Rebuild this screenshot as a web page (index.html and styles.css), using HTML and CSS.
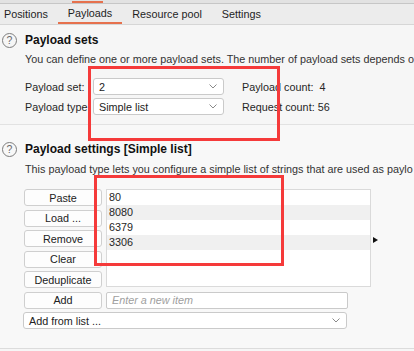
FILE: index.html
```html
<!DOCTYPE html>
<html lang="en">
  <head>
    <meta charset="UTF-8" />
    <title>Intruder payloads</title>
    <link rel="stylesheet" href="styles.css">
  </head>
  <body>
    <div class="topstrip"><span class="top-mark"></span></div>
    <div class="tabs">
      <div class="tab first">Positions</div>
      <div class="tab active">Payloads</div>
      <div class="tab">Resource pool</div>
      <div class="tab">Settings</div>
    </div>

    <div class="section sets">
      <div class="heading">
        <span class="help">?</span>
        <h2>Payload sets</h2>
      </div>
      <p class="desc">You can define one or more payload sets. The number of payload sets depends o</p>
      <div class="row">
        <label class="lbl">Payload set:</label>
        <div class="select short"><span>2</span>
          <svg class="chev" width="8" height="5" viewBox="0 0 8 5"><polyline points="0.5,0.5 4,4 7.5,0.5" /></svg>
        </div>
        <span class="count">Payload count:&nbsp; 4</span>
      </div>
      <div class="row">
        <label class="lbl">Payload type:</label>
        <div class="select short"><span>Simple list</span>
          <svg class="chev" width="8" height="5" viewBox="0 0 8 5"><polyline points="0.5,0.5 4,4 7.5,0.5" /></svg>
        </div>
        <span class="count">Request count: 56</span>
      </div>
    </div>

    <div class="section settings">
      <div class="heading">
        <span class="help">?</span>
        <h2>Payload settings [Simple list]</h2>
      </div>
      <p class="desc">This payload type lets you configure a simple list of strings that are used as paylo</p>

      <div class="editor">
        <div class="list-area">
          <div class="btn-col">
            <button class="btn">Paste</button>
            <button class="btn">Load ...</button>
            <button class="btn">Remove</button>
            <button class="btn">Clear</button>
            <button class="btn">Deduplicate</button>
          </div>
          <div class="listbox">
            <div class="item">80</div>
            <div class="item">8080</div>
            <div class="item">6379</div>
            <div class="item">3306</div>
          </div>
          <span class="expand"></span>
        </div>
        <div class="add-row">
          <button class="btn">Add</button>
          <div class="input">Enter a new item</div>
        </div>
        <div class="select wide"><span>Add from list ...</span>
          <svg class="chev" width="8" height="5" viewBox="0 0 8 5"><polyline points="0.5,0.5 4,4 7.5,0.5" /></svg>
        </div>
      </div>
    </div>

    <div class="mark mark-one"></div>
    <div class="mark mark-two"></div>
  </body>
</html>
```

FILE: styles.css
```css
body {
  margin: 0;
  width: 414px;
  height: 351px;
  overflow: hidden;
  position: relative;
  background: #f6f6f6;
  font-family: "Liberation Sans", Arial, sans-serif;
  font-size: 10.8px;
  color: #262626;
}
.topstrip {
  height: 3px;
  background: #e2e2e2;
  border-bottom: 1px solid #c6c6c6;
  display: flex;
  align-items: flex-end;
}
.top-mark {
  margin-left: 72px;
  width: 31px;
  height: 2px;
  background: #e6714d;
}
.tabs {
  height: 20px;
  background: #ececec;
  border-bottom: 1px solid #d6d6d6;
  display: flex;
  color: #1e1e1e;
}
.tab {
  padding: 0 10px;
  line-height: 20px;
  box-sizing: border-box;
}
.tab.first {
  padding-left: 4px;
}
.tab.active {
  border-bottom: 2px solid #e6714d;
  line-height: 19px;
}
.section {
  padding-left: 25px;
}
.sets {
  padding-top: 7px;
  padding-bottom: 9px;
  border-bottom: 1px solid #e2e2e2;
}
.settings {
  padding-top: 16px;
  background: #f8f8f8;
  height: 207px;
  border-bottom: 1px solid #dcdcdc;
}
.heading {
  display: flex;
  align-items: center;
  height: 16px;
  margin-left: -24px;
}
.help {
  width: 13px;
  height: 13px;
  border: 1.3px solid #7d7d7d;
  border-radius: 50%;
  color: #6a6a6a;
  font-size: 10.5px;
  line-height: 13px;
  text-align: center;
  margin-left: 1px;
  margin-right: 8px;
}
h2 {
  margin: 0;
  font-size: 12px;
  font-weight: bold;
  color: #111;
  white-space: nowrap;
}
.desc {
  margin: 4px 0 0;
  line-height: 15px;
  white-space: nowrap;
  color: #333;
}
.sets .desc {
  margin-bottom: 11px;
}
.settings .desc {
  margin: 5px 0 12px;
}
.row {
  display: flex;
  align-items: center;
  height: 17px;
}
.row + .row {
  margin-top: 3px;
}
.lbl {
  width: 68px;
  white-space: nowrap;
}
.select {
  height: 17px;
  box-sizing: border-box;
  background: #fff;
  border: 1px solid #cacaca;
  border-radius: 3px;
  display: flex;
  align-items: center;
  justify-content: space-between;
  padding: 0 6px 0 5px;
  color: #222;
}
.select.short {
  width: 131px;
}
.select.wide {
  width: 324px;
  margin-left: -1px;
}
.chev {
  fill: none;
  stroke: #8a8a8a;
  stroke-width: 1;
}
.count {
  margin-left: 18px;
  white-space: nowrap;
}
.editor {
  margin-left: -1px;
}
.list-area {
  display: flex;
  gap: 4px;
}
.btn-col {
  display: flex;
  flex-direction: column;
  gap: 3.5px;
}
.btn {
  width: 78px;
  height: 17px;
  padding: 0;
  background: #fdfdfd;
  border: 1px solid #cfcfcf;
  border-radius: 3px;
  font-family: inherit;
  font-size: 10.8px;
  color: #222;
}
.listbox {
  width: 265px;
  height: 98px;
  box-sizing: border-box;
  background: #fff;
  border: 1px solid #dadada;
}
.item {
  height: 15px;
  line-height: 15px;
  padding-left: 2px;
}
.item:nth-child(even) {
  background: #f0f0f0;
}
.expand {
  align-self: center;
  margin-left: -2px;
  margin-top: 2px;
  width: 0;
  height: 0;
  border-left: 5px solid #111;
  border-top: 3.5px solid transparent;
  border-bottom: 3.5px solid transparent;
}
.add-row {
  display: flex;
  gap: 4px;
  margin: 3.5px 0;
}
.input {
  width: 242px;
  height: 17px;
  box-sizing: border-box;
  background: #fff;
  border: 1px solid #cacaca;
  border-radius: 2px;
  padding-left: 5px;
  line-height: 15px;
  font-style: italic;
  color: #a0a0a0;
}
.mark {
  position: absolute;
  border: 3px solid #f53a3a;
  box-sizing: border-box;
}
.mark-one {
  left: 88px;
  top: 66px;
  width: 192px;
  height: 75px;
}
.mark-two {
  left: 94px;
  top: 175px;
  width: 190px;
  height: 91px;
}
```
